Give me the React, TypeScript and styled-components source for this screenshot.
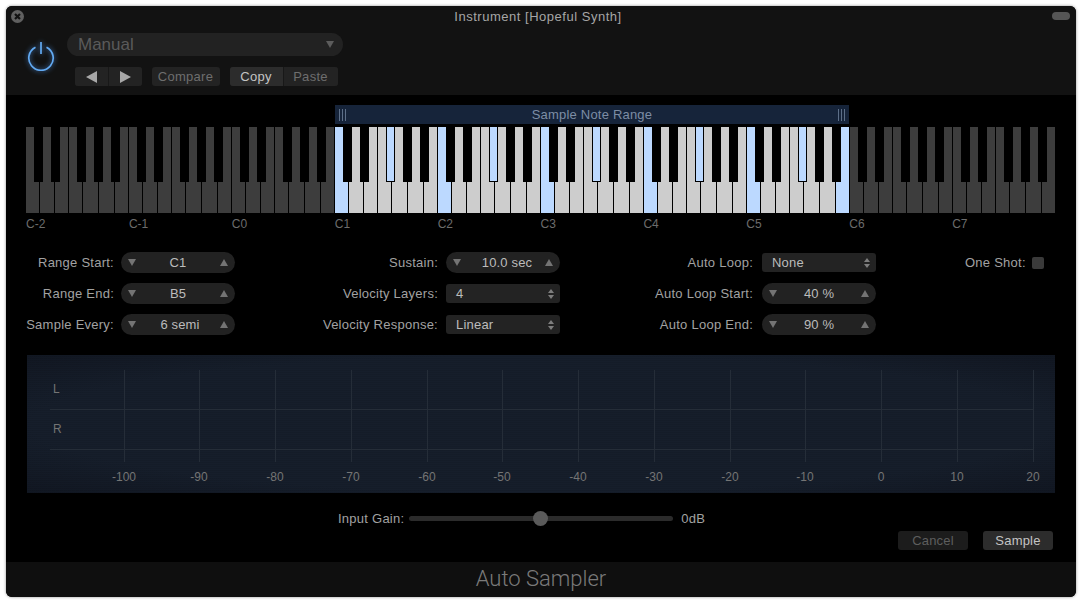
import React from "react"
import styled, { createGlobalStyle } from "styled-components"

const OCTAVE_LABELS = ["C-2", "C-1", "C0", "C1", "C2", "C3", "C4", "C5", "C6", "C7"]
const WHITE_WIDTHS = [14, 15, 14, 14, 16, 16, 14]
const BLACK_KEYS = [
  { left: 8, width: 9, semi: 1 },
  { left: 25, width: 9, semi: 3 },
  { left: 51, width: 9, semi: 6 },
  { left: 68, width: 9, semi: 8 },
  { left: 85, width: 9, semi: 10 },
]
const TICKS = [-100, -90, -80, -70, -60, -50, -40, -30, -20, -10, 0, 10, 20]

const App: React.FC = () => {
  return (
    <Page>
      <GlobalStyle />
      <Window>
        <Header>
          <TitleBar>
            <CloseButton>
              <svg width="13" height="13" viewBox="0 0 13 13">
                <circle cx="6.5" cy="6.5" r="6.5" fill="#606060" />
                <path d="M4 4l5 5M9 4l-5 5" stroke="#111" strokeWidth="2.2" />
              </svg>
            </CloseButton>
            <Title>Instrument [Hopeful Synth]</Title>
            <ZoomPill />
          </TitleBar>
          <HeaderRow>
            <PowerIcon width="30" height="30" viewBox="0 0 30 30">
              <path
                d="M9.5 6.2a12.2 12.2 0 1 0 11 0"
                fill="none"
                stroke="#62aaf2"
                strokeWidth="1.7"
              />
              <path d="M15 1v12" stroke="#62aaf2" strokeWidth="1.7" />
            </PowerIcon>
            <PresetColumn>
              <PresetSelect>
                <span>Manual</span>
                <PresetArrow />
              </PresetSelect>
              <PresetButtons>
                <ButtonGroup>
                  <GroupButton $width={33}>
                    <ArrowLeft />
                  </GroupButton>
                  <GroupButton $width={34}>
                    <ArrowRight />
                  </GroupButton>
                </ButtonGroup>
                <ButtonGroup>
                  <GroupButton $width={68} $dim>
                    Compare
                  </GroupButton>
                </ButtonGroup>
                <ButtonGroup>
                  <GroupButton $width={53} $active>
                    Copy
                  </GroupButton>
                  <GroupButton $width={55} $dim>
                    Paste
                  </GroupButton>
                </ButtonGroup>
              </PresetButtons>
            </PresetColumn>
          </HeaderRow>
        </Header>

        <Main>
          <RangeBar>
            <RangeHandle />
            <span>Sample Note Range</span>
            <RangeHandle />
          </RangeBar>
          <Keyboard>
            {OCTAVE_LABELS.map((_, octave) => {
              const inRange = octave >= 3 && octave <= 7
              return (
                <Octave key={octave}>
                  {WHITE_WIDTHS.map((w, i) => (
                    <WhiteKey
                      key={i}
                      $width={w}
                      $tone={
                        inRange && (i === 0 || (octave === 7 && i === 6))
                          ? "sampled"
                          : inRange
                            ? "range"
                            : "off"
                      }
                    />
                  ))}
                  {BLACK_KEYS.map((b) => (
                    <BlackKey
                      key={b.semi}
                      $left={b.left}
                      $width={b.width}
                      $sampled={inRange && b.semi === 6}
                    />
                  ))}
                </Octave>
              )
            })}
          </Keyboard>
          <KeyLabels>
            {OCTAVE_LABELS.map((label) => (
              <KeyLabel key={label}>{label}</KeyLabel>
            ))}
          </KeyLabels>

          <Params>
            <ParamColumn $labelWidth={88} $gap={7}>
              <ParamLabel>Range Start:</ParamLabel>
              <Stepper value="C1" />
              <ParamLabel>Range End:</ParamLabel>
              <Stepper value="B5" />
              <ParamLabel>Sample Every:</ParamLabel>
              <Stepper value="6 semi" nudge={4} />
            </ParamColumn>
            <ParamColumn $labelWidth={120} $gap={8} $offset={83}>
              <ParamLabel>Sustain:</ParamLabel>
              <Stepper value="10.0 sec" nudge={8} />
              <ParamLabel>Velocity Layers:</ParamLabel>
              <UpDownSelect value="4" />
              <ParamLabel>Velocity Response:</ParamLabel>
              <UpDownSelect value="Linear" />
            </ParamColumn>
            <ParamColumn $labelWidth={133} $gap={9} $offset={60}>
              <ParamLabel>Auto Loop:</ParamLabel>
              <UpDownSelect value="None" />
              <ParamLabel>Auto Loop Start:</ParamLabel>
              <Stepper value="40 %" />
              <ParamLabel>Auto Loop End:</ParamLabel>
              <Stepper value="90 %" />
            </ParamColumn>
            <OneShot>
              <ParamLabel>One Shot:</ParamLabel>
              <CheckBox />
            </OneShot>
          </Params>

          <MeterPanel>
            <svg width="1028" height="138" viewBox="0 0 1028 138">
              <line x1="23" x2="1006" y1="54.5" y2="54.5" stroke="#252d38" />
              <line x1="23" x2="1006" y1="94.5" y2="94.5" stroke="#252d38" />
              {TICKS.map((t, i) => {
                const x = Math.floor(97 + i * 75.75) + 0.5
                return (
                  <g key={t}>
                    <line x1={x} x2={x} y1="15" y2="107" stroke="#252d38" />
                    <MeterText x={x - 0.5} y="126" textAnchor="middle">
                      {t}
                    </MeterText>
                  </g>
                )
              })}
              <MeterText x="26" y="38">
                L
              </MeterText>
              <MeterText x="26" y="78">
                R
              </MeterText>
            </svg>
          </MeterPanel>

          <GainRow>
            <ParamLabel>Input Gain:</ParamLabel>
            <GainTrack>
              <GainThumb />
            </GainTrack>
            <ParamLabel>0dB</ParamLabel>
          </GainRow>

          <Actions>
            <ActionButton $dim>Cancel</ActionButton>
            <ActionButton>Sample</ActionButton>
          </Actions>
        </Main>

        <Footer>Auto Sampler</Footer>
      </Window>
    </Page>
  )
}

const Stepper: React.FC<{ value: string; nudge?: number }> = ({
  value,
  nudge,
}) => (
  <StepperRoot>
    <TriangleDown />
    <StepperValue $nudge={nudge || 0}>{value}</StepperValue>
    <TriangleUp />
  </StepperRoot>
)

const UpDownSelect: React.FC<{ value: string }> = ({ value }) => (
  <SelectRoot>
    <span>{value}</span>
    <SelectArrows>
      <SmallUp />
      <SmallDown />
    </SelectArrows>
  </SelectRoot>
)

export default App

const GlobalStyle = createGlobalStyle`
  html, body {
    margin: 0;
    background: #fff;
  }
  * {
    box-sizing: border-box;
  }
`
const Page = styled.div`
  width: 1082px;
  height: 602px;
  padding: 6px 6px 5px;
  font-family: "Liberation Sans", Arial, sans-serif;
  overflow: hidden;
`
const Window = styled.div`
  display: flex;
  flex-direction: column;
  height: 100%;
  border-radius: 6px;
  overflow: hidden;
  background: #000;
  box-shadow: 0 0 3px rgba(0, 0, 0, 0.45);
`
const Header = styled.div`
  height: 89px;
  flex: none;
  background: #121212;
`
const TitleBar = styled.div`
  display: flex;
  align-items: center;
  justify-content: space-between;
  height: 20px;
  padding: 1px 6px 0 5px;
`
const CloseButton = styled.div`
  display: flex;
  width: 13px;
  height: 13px;
`
const Title = styled.div`
  font-size: 13px;
  letter-spacing: 0.52px;
  color: #a6a6a6;
`
const ZoomPill = styled.div`
  width: 18px;
  height: 8px;
  border-radius: 4px;
  background: #555;
  margin-top: -2px;
`
const HeaderRow = styled.div`
  display: flex;
  padding: 7px 0 0 20px;
`
const PowerIcon = styled.svg`
  margin: 8px 0 0 0;
  filter: drop-shadow(0 0 2.5px rgba(80, 150, 240, 0.85));
`
const PresetColumn = styled.div`
  display: flex;
  flex-direction: column;
  margin-left: 11px;
`
const PresetSelect = styled.div`
  display: flex;
  align-items: center;
  justify-content: space-between;
  width: 276px;
  height: 23px;
  padding: 0 9px 0 11px;
  border-radius: 12px;
  background: #222;
  font-size: 17px;
  color: #5a5a5a;
`
const PresetArrow = styled.div`
  width: 0;
  height: 0;
  border-left: 4px solid transparent;
  border-right: 4px solid transparent;
  border-top: 7px solid #5c5c5c;
`
const PresetButtons = styled.div`
  display: flex;
  gap: 10px;
  margin: 11px 0 0 8px;
`
const ButtonGroup = styled.div`
  display: flex;
  height: 19px;
  border-radius: 3px;
  overflow: hidden;
  background: #222;
`
const GroupButton = styled.div<{
  $width: number
  $active?: boolean
  $dim?: boolean
}>`
  display: flex;
  align-items: center;
  justify-content: center;
  width: ${(p) => p.$width}px;
  padding-right: 1px;
  font-size: 13px;
  letter-spacing: 0.3px;
  color: ${(p) => (p.$dim ? "#6e6e6e" : "#c4c4c4")};
  background: ${(p) => (p.$active ? "#2c2c2c" : "#232323")};
  & + & {
    border-left: 1px solid #181818;
  }
`
const ArrowLeft = styled.div`
  width: 0;
  height: 0;
  border-top: 6px solid transparent;
  border-bottom: 6px solid transparent;
  border-right: 11px solid #a8a8a8;
`
const ArrowRight = styled.div`
  width: 0;
  height: 0;
  border-top: 6px solid transparent;
  border-bottom: 6px solid transparent;
  border-left: 11px solid #a8a8a8;
`
const Main = styled.div`
  flex: 1;
  display: flex;
  flex-direction: column;
  padding: 10px 21px 0 20px;
  background: #000;
`
const RangeBar = styled.div`
  display: flex;
  align-items: center;
  justify-content: space-between;
  width: 514px;
  height: 19px;
  margin-left: 309px;
  padding: 0 4px;
  background: #16243a;
  font-size: 13px;
  letter-spacing: 0.2px;
  color: #7d8da5;
`
const RangeHandle = styled.div`
  width: 7px;
  height: 12px;
  background: repeating-linear-gradient(
    90deg,
    #5d6f88 0,
    #5d6f88 1px,
    transparent 1px,
    transparent 3px
  );
`
const Keyboard = styled.div`
  display: flex;
  height: 86px;
  margin-top: 3px;
`
const Octave = styled.div`
  position: relative;
  display: flex;
  width: 103px;
`
const WHITE_TONES = { off: "#3d3d3d", range: "#cdcdcd", sampled: "#bcd9ff" }
const WhiteKey = styled.div<{
  $width: number
  $tone: keyof typeof WHITE_TONES
}>`
  width: ${(p) => p.$width}px;
  height: 100%;
  border-right: 1px solid #000;
  background: ${(p) => WHITE_TONES[p.$tone]};
`
const BlackKey = styled.div<{
  $left: number
  $width: number
  $sampled?: boolean
}>`
  position: absolute;
  top: 0;
  left: ${(p) => p.$left}px;
  width: ${(p) => p.$width}px;
  height: 55px;
  background: ${(p) => (p.$sampled ? "#bcd9ff" : "#000")};
  border: 1px solid #000;
  border-top: 0;
`
const KeyLabels = styled.div`
  display: flex;
  margin-top: 4px;
`
const KeyLabel = styled.div`
  width: 103px;
  height: 15px;
  line-height: 15px;
  font-size: 12px;
  color: #6c6c6c;
`
const Params = styled.div`
  display: flex;
  margin-top: 20px;
`
const ParamColumn = styled.div<{
  $labelWidth: number
  $gap: number
  $offset?: number
}>`
  display: grid;
  grid-template-columns: ${(p) => p.$labelWidth}px 114px;
  grid-auto-rows: 21px;
  column-gap: ${(p) => p.$gap}px;
  row-gap: 10px;
  margin-left: ${(p) => p.$offset || 0}px;
`
const ParamLabel = styled.div`
  align-self: center;
  text-align: right;
  white-space: nowrap;
  font-size: 13px;
  letter-spacing: 0.25px;
  color: #a2a2a2;
`
const StepperRoot = styled.div`
  display: flex;
  align-items: center;
  justify-content: space-between;
  padding: 0 7px 0 7px;
  border-radius: 11px;
  background: #222;
  font-size: 13px;
  letter-spacing: 0.15px;
  color: #bcbcbc;
`
const StepperValue = styled.span<{ $nudge: number }>`
  margin-left: ${(p) => p.$nudge}px;
`
const TriangleDown = styled.div`
  width: 0;
  height: 0;
  border-left: 4.5px solid transparent;
  border-right: 4.5px solid transparent;
  border-top: 7px solid #747474;
`
const TriangleUp = styled.div`
  width: 0;
  height: 0;
  border-left: 4.5px solid transparent;
  border-right: 4.5px solid transparent;
  border-bottom: 7px solid #747474;
`
const SelectRoot = styled.div`
  display: flex;
  align-items: center;
  justify-content: space-between;
  height: 19px;
  align-self: center;
  padding: 0 6px 0 10px;
  border-radius: 3px;
  background: #232323;
  font-size: 13px;
  letter-spacing: 0.2px;
  color: #bcbcbc;
`
const SelectArrows = styled.div`
  display: flex;
  flex-direction: column;
  gap: 2px;
`
const SmallUp = styled.div`
  width: 0;
  height: 0;
  border-left: 3px solid transparent;
  border-right: 3px solid transparent;
  border-bottom: 4px solid #7e7e7e;
`
const SmallDown = styled.div`
  width: 0;
  height: 0;
  border-left: 3px solid transparent;
  border-right: 3px solid transparent;
  border-top: 4px solid #7e7e7e;
`
const OneShot = styled.div`
  display: flex;
  align-items: center;
  gap: 6px;
  height: 21px;
  margin-left: 89px;
`
const CheckBox = styled.div`
  width: 12px;
  height: 12px;
  border-radius: 2px;
  background: #3a3a3a;
`
const MeterPanel = styled.div`
  display: flex;
  width: 1028px;
  height: 138px;
  margin: 20px 0 0 1px;
  background:
    repeating-linear-gradient(0deg, rgba(0, 0, 0, 0.08) 0 1px, transparent 1px 2px),
    radial-gradient(ellipse at center, #161e2b 70%, #111722 100%);
`
const MeterText = styled.text`
  font-family: "Liberation Sans", Arial, sans-serif;
  font-size: 12px;
  fill: #747474;
`
const GainRow = styled.div`
  display: flex;
  align-items: center;
  height: 20px;
  margin-top: 15px;
  padding-left: 312px;
`
const GainTrack = styled.div`
  position: relative;
  width: 264px;
  height: 5px;
  margin: 1px 8px 0 5px;
  border-radius: 3px;
  background: #2b2b2b;
`
const GainThumb = styled.div`
  position: absolute;
  top: -5px;
  left: 124px;
  width: 15px;
  height: 15px;
  border-radius: 50%;
  background: #5a5a5a;
`
const Actions = styled.div`
  display: flex;
  justify-content: flex-end;
  gap: 15px;
  margin-top: 3px;
  padding-right: 2px;
`
const ActionButton = styled.div<{ $dim?: boolean }>`
  display: flex;
  align-items: center;
  justify-content: center;
  width: 70px;
  height: 19px;
  border-radius: 3px;
  font-size: 13px;
  letter-spacing: 0.2px;
  color: ${(p) => (p.$dim ? "#5e5e5e" : "#c4c4c4")};
  background: ${(p) => (p.$dim ? "#1c1c1c" : "#2c2c2c")};
`
const Footer = styled.div`
  flex: none;
  height: 35px;
  line-height: 34px;
  text-align: center;
  font-family: Roboto, "Liberation Sans", sans-serif;
  font-weight: 300;
  font-size: 22px;
  color: #7a7a7a;
  background: #0f0f0f;
`
